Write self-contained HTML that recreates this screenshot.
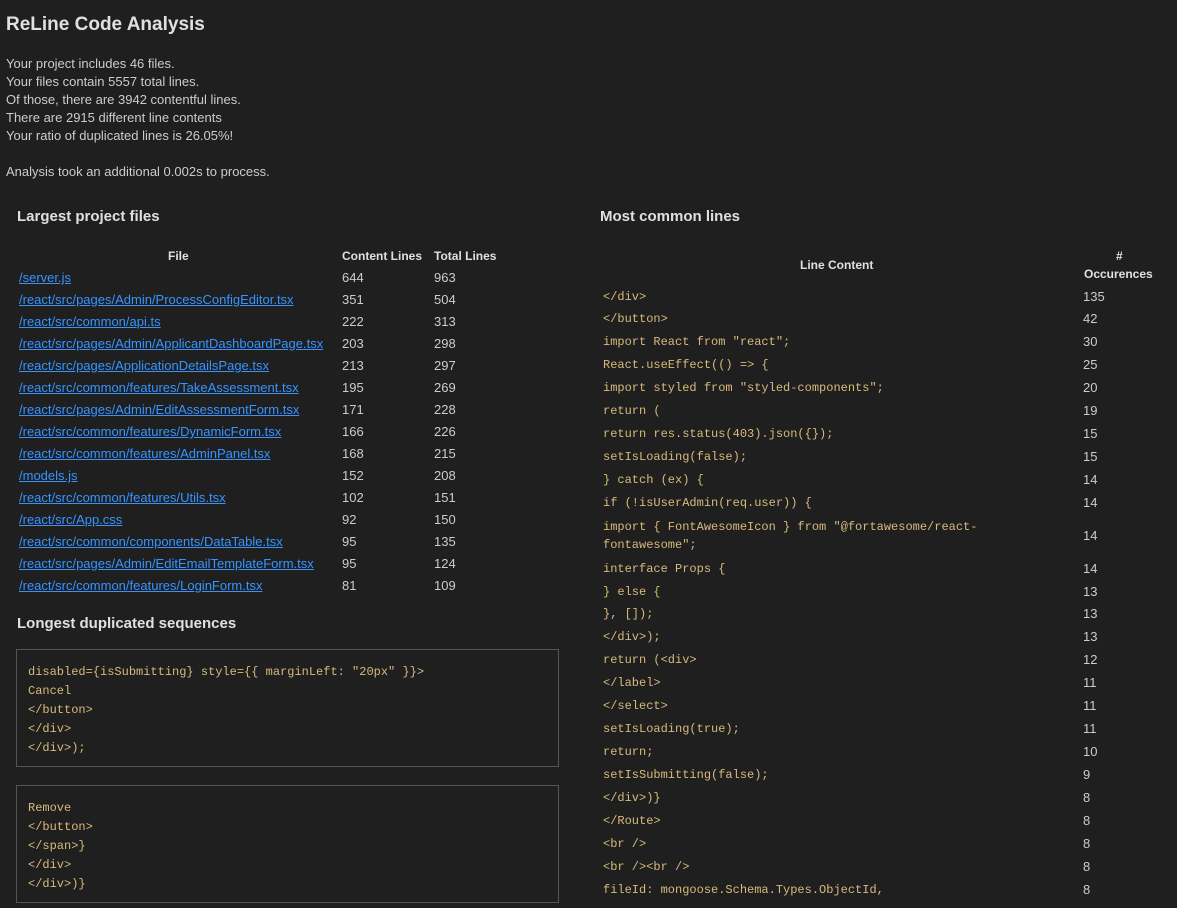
<!DOCTYPE html>
<html><head><meta charset="utf-8"><style>
html,body{margin:0;padding:0;background:#1f1f1f;width:1177px;height:908px;overflow:hidden}
body{font-family:"Liberation Sans",sans-serif;color:#cccccc;font-size:13px;position:relative}
.a{position:absolute;white-space:nowrap;line-height:18px}
.h{font-weight:bold;color:#e0e0e0}
a{color:#3794ff;text-decoration:underline}
.c{font-family:"Liberation Mono",monospace;font-size:12px;color:#d7ba7d}
.box{position:absolute;left:16px;width:541px;border:1px solid #555;height:116px}
.box div{position:absolute;left:11px;line-height:19px}
</style></head><body>
<div class="a h" style="left:6px;top:13px;font-size:19px;line-height:24px">ReLine Code Analysis</div>
<div class="a" style="left:6px;top:55px">Your project includes 46 files.</div>
<div class="a" style="left:6px;top:73px">Your files contain 5557 total lines.</div>
<div class="a" style="left:6px;top:91px">Of those, there are 3942 contentful lines.</div>
<div class="a" style="left:6px;top:109px">There are 2915 different line contents</div>
<div class="a" style="left:6px;top:127px">Your ratio of duplicated lines is 26.05%!</div>
<div class="a" style="left:6px;top:163px">Analysis took an additional 0.002s to process.</div>

<div class="a h" style="left:17px;top:208px;font-size:15px">Largest project files</div>
<div class="a h" style="left:168px;top:247px;font-size:12px">File</div>
<div class="a h" style="left:342px;top:247px;font-size:12px">Content Lines</div>
<div class="a h" style="left:434px;top:247px;font-size:12px">Total Lines</div>

<div class="a h" style="left:17px;top:615px;font-size:15px">Longest duplicated sequences</div>
<div class="box c" style="top:649px">
<div style="top:13px">disabled={isSubmitting} style={{ marginLeft: "20px" }}&gt;</div>
<div style="top:32px">Cancel</div>
<div style="top:51px">&lt;/button&gt;</div>
<div style="top:70px">&lt;/div&gt;</div>
<div style="top:89px">&lt;/div&gt;);</div>
</div>
<div class="box c" style="top:785px">
<div style="top:13px">Remove</div>
<div style="top:32px">&lt;/button&gt;</div>
<div style="top:51px">&lt;/span&gt;}</div>
<div style="top:70px">&lt;/div&gt;</div>
<div style="top:89px">&lt;/div&gt;)}</div>
</div>

<div class="a h" style="left:600px;top:208px;font-size:15px">Most common lines</div>
<div class="a h" style="left:800px;top:256px;font-size:12px">Line Content</div>
<div class="a h" style="left:1116px;top:247px;font-size:12px">#</div>
<div class="a h" style="left:1084px;top:265px;font-size:12px">Occurences</div>

<div class="a" style="left:19px;top:269px"><a>/server.js</a></div><div class="a" style="left:342px;top:269px">644</div><div class="a" style="left:434px;top:269px">963</div>
<div class="a" style="left:19px;top:291px"><a>/react/src/pages/Admin/ProcessConfigEditor.tsx</a></div><div class="a" style="left:342px;top:291px">351</div><div class="a" style="left:434px;top:291px">504</div>
<div class="a" style="left:19px;top:313px"><a>/react/src/common/api.ts</a></div><div class="a" style="left:342px;top:313px">222</div><div class="a" style="left:434px;top:313px">313</div>
<div class="a" style="left:19px;top:335px"><a>/react/src/pages/Admin/ApplicantDashboardPage.tsx</a></div><div class="a" style="left:342px;top:335px">203</div><div class="a" style="left:434px;top:335px">298</div>
<div class="a" style="left:19px;top:357px"><a>/react/src/pages/ApplicationDetailsPage.tsx</a></div><div class="a" style="left:342px;top:357px">213</div><div class="a" style="left:434px;top:357px">297</div>
<div class="a" style="left:19px;top:379px"><a>/react/src/common/features/TakeAssessment.tsx</a></div><div class="a" style="left:342px;top:379px">195</div><div class="a" style="left:434px;top:379px">269</div>
<div class="a" style="left:19px;top:401px"><a>/react/src/pages/Admin/EditAssessmentForm.tsx</a></div><div class="a" style="left:342px;top:401px">171</div><div class="a" style="left:434px;top:401px">228</div>
<div class="a" style="left:19px;top:423px"><a>/react/src/common/features/DynamicForm.tsx</a></div><div class="a" style="left:342px;top:423px">166</div><div class="a" style="left:434px;top:423px">226</div>
<div class="a" style="left:19px;top:445px"><a>/react/src/common/features/AdminPanel.tsx</a></div><div class="a" style="left:342px;top:445px">168</div><div class="a" style="left:434px;top:445px">215</div>
<div class="a" style="left:19px;top:467px"><a>/models.js</a></div><div class="a" style="left:342px;top:467px">152</div><div class="a" style="left:434px;top:467px">208</div>
<div class="a" style="left:19px;top:489px"><a>/react/src/common/features/Utils.tsx</a></div><div class="a" style="left:342px;top:489px">102</div><div class="a" style="left:434px;top:489px">151</div>
<div class="a" style="left:19px;top:511px"><a>/react/src/App.css</a></div><div class="a" style="left:342px;top:511px">92</div><div class="a" style="left:434px;top:511px">150</div>
<div class="a" style="left:19px;top:533px"><a>/react/src/common/components/DataTable.tsx</a></div><div class="a" style="left:342px;top:533px">95</div><div class="a" style="left:434px;top:533px">135</div>
<div class="a" style="left:19px;top:555px"><a>/react/src/pages/Admin/EditEmailTemplateForm.tsx</a></div><div class="a" style="left:342px;top:555px">95</div><div class="a" style="left:434px;top:555px">124</div>
<div class="a" style="left:19px;top:577px"><a>/react/src/common/features/LoginForm.tsx</a></div><div class="a" style="left:342px;top:577px">81</div><div class="a" style="left:434px;top:577px">109</div>

<div class="a c" style="left:603px;top:288px">&lt;/div&gt;</div><div class="a" style="left:1083px;top:288px">135</div>
<div class="a c" style="left:603px;top:310px">&lt;/button&gt;</div><div class="a" style="left:1083px;top:310px">42</div>
<div class="a c" style="left:603px;top:333px">import React from "react";</div><div class="a" style="left:1083px;top:333px">30</div>
<div class="a c" style="left:603px;top:356px">React.useEffect(() =&gt; {</div><div class="a" style="left:1083px;top:356px">25</div>
<div class="a c" style="left:603px;top:379px">import styled from "styled-components";</div><div class="a" style="left:1083px;top:379px">20</div>
<div class="a c" style="left:603px;top:402px">return (</div><div class="a" style="left:1083px;top:402px">19</div>
<div class="a c" style="left:603px;top:425px">return res.status(403).json({});</div><div class="a" style="left:1083px;top:425px">15</div>
<div class="a c" style="left:603px;top:448px">setIsLoading(false);</div><div class="a" style="left:1083px;top:448px">15</div>
<div class="a c" style="left:603px;top:471px">} catch (ex) {</div><div class="a" style="left:1083px;top:471px">14</div>
<div class="a c" style="left:603px;top:494px">if (!isUserAdmin(req.user)) {</div><div class="a" style="left:1083px;top:494px">14</div>
<div class="a c" style="left:603px;top:518px">import { FontAwesomeIcon } from "@fortawesome/react-</div>
<div class="a c" style="left:603px;top:536px">fontawesome";</div><div class="a" style="left:1083px;top:527px">14</div>
<div class="a c" style="left:603px;top:560px">interface Props {</div><div class="a" style="left:1083px;top:560px">14</div>
<div class="a c" style="left:603px;top:583px">} else {</div><div class="a" style="left:1083px;top:583px">13</div>
<div class="a c" style="left:603px;top:605px">}, []);</div><div class="a" style="left:1083px;top:605px">13</div>
<div class="a c" style="left:603px;top:628px">&lt;/div&gt;);</div><div class="a" style="left:1083px;top:628px">13</div>
<div class="a c" style="left:603px;top:651px">return (&lt;div&gt;</div><div class="a" style="left:1083px;top:651px">12</div>
<div class="a c" style="left:603px;top:674px">&lt;/label&gt;</div><div class="a" style="left:1083px;top:674px">11</div>
<div class="a c" style="left:603px;top:697px">&lt;/select&gt;</div><div class="a" style="left:1083px;top:697px">11</div>
<div class="a c" style="left:603px;top:720px">setIsLoading(true);</div><div class="a" style="left:1083px;top:720px">11</div>
<div class="a c" style="left:603px;top:743px">return;</div><div class="a" style="left:1083px;top:743px">10</div>
<div class="a c" style="left:603px;top:766px">setIsSubmitting(false);</div><div class="a" style="left:1083px;top:766px">9</div>
<div class="a c" style="left:603px;top:789px">&lt;/div&gt;)}</div><div class="a" style="left:1083px;top:789px">8</div>
<div class="a c" style="left:603px;top:812px">&lt;/Route&gt;</div><div class="a" style="left:1083px;top:812px">8</div>
<div class="a c" style="left:603px;top:835px">&lt;br /&gt;</div><div class="a" style="left:1083px;top:835px">8</div>
<div class="a c" style="left:603px;top:858px">&lt;br /&gt;&lt;br /&gt;</div><div class="a" style="left:1083px;top:858px">8</div>
<div class="a c" style="left:603px;top:881px">fileId: mongoose.Schema.Types.ObjectId,</div><div class="a" style="left:1083px;top:881px">8</div>
</body></html>
